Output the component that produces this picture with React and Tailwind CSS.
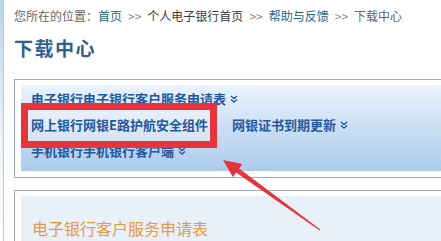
const Chevrons = ({ className = '' }) => (
  <svg width="8" height="8" viewBox="0 0 8 8" className={className}>
    <path d="M1 1 L4 3.5 L7 1 M1 4.5 L4 7 L7 4.5" fill="none" stroke="currentColor" strokeWidth="1.4" />
  </svg>
);

const Sep = () => <span className="mx-[6px] text-[#888]">&gt;&gt;</span>;

const App = () => {
  return (
    <div
      className="relative w-[441px] h-[241px] overflow-hidden bg-white flex"
      style={{ fontFamily: '"Noto Sans CJK SC", "Liberation Sans", sans-serif' }}
    >
      {/* left frame strip */}
      <div className="w-[4px] shrink-0 border-r border-[#b9c9d9] bg-gradient-to-b from-[#b8d4ec] via-[#e6f0f8] to-white" />

      <div className="flex-1 flex flex-col">
        <div className="h-[5px] ml-[3px] bg-gradient-to-b from-[#f0f0f0] to-[#dcdcdc] shadow-[0_1px_2px_rgba(0,0,0,0.15)]" />

        <div className="pl-[10px]">
          {/* breadcrumb */}
          <div className="mt-[8px] h-[16px] flex items-center text-[12px] leading-[16px] text-[#666] whitespace-nowrap">
            <span>您所在的位置：</span>
            <span className="text-[#1f6784]">首页</span>
            <Sep />
            <span className="text-[#3a3a3a]">个人电子银行首页</span>
            <Sep />
            <span className="text-[#1f6784]">帮助与反馈</span>
            <Sep />
            <span>下载中心</span>
          </div>

          {/* title */}
          <div className="mt-[12px] h-[24px] flex items-center text-[19px] font-bold tracking-[1.5px] text-[#2d6390]">
            下载中心
          </div>

          {/* box 1 */}
          <div className="mt-[19px] w-[440px] border border-[#9fa9b3] px-[6px] pt-[5px] pb-[6px] bg-white">
            <div className="relative h-[86px] pl-[10px] pt-[1px] bg-gradient-to-b from-[#eaf3fb] to-[#accbec] text-[13px] font-bold text-[#2359a0] whitespace-nowrap">
              <div className="h-[26px] flex items-center gap-[4px]">
                <span>电子银行电子银行客户服务申请表</span>
                <Chevrons />
              </div>
              <div className="h-[26px] flex items-center">
                <div className="relative w-[176px] h-full flex items-center">
                  <div className="absolute -left-[10px] -top-[9px] w-[196px] h-[45px] border-[7px] border-[#e8333a] bg-gradient-to-b from-[#e8f0f7] to-[#d6e4f1]" />
                  <span className="relative">网上银行网银E路护航安全组件</span>
                </div>
                <div className="ml-[25px] flex items-center gap-[4px]">
                  <span>网银证书到期更新</span>
                  <Chevrons />
                </div>
              </div>
              <div className="h-[26px] flex items-center gap-[4px]">
                <span>手机银行手机银行客户端</span>
                <Chevrons />
              </div>
            </div>
          </div>

          {/* box 2 */}
          <div className="mt-[12px] w-[440px] border border-[#9fa9b3] px-[6px] pt-[5px] bg-white">
            <div className="h-[60px] pl-[11px] pt-[20px] bg-[#e8f0fa]">
              <div className="h-[24px] flex items-center text-[16px] text-[#e89b3e]">电子银行客户服务申请表</div>
            </div>
          </div>
        </div>
      </div>

      {/* annotation arrow */}
      <svg className="absolute inset-0 pointer-events-none" width="441" height="241" viewBox="0 0 441 241">
        <polygon
          points="223,160 242.3,164 239.1,168.5 320.3,229.6 319.7,230.4 236.1,172.5 232.9,177"
          fill="#e8333a"
        />
      </svg>
    </div>
  );
};

export default App;
